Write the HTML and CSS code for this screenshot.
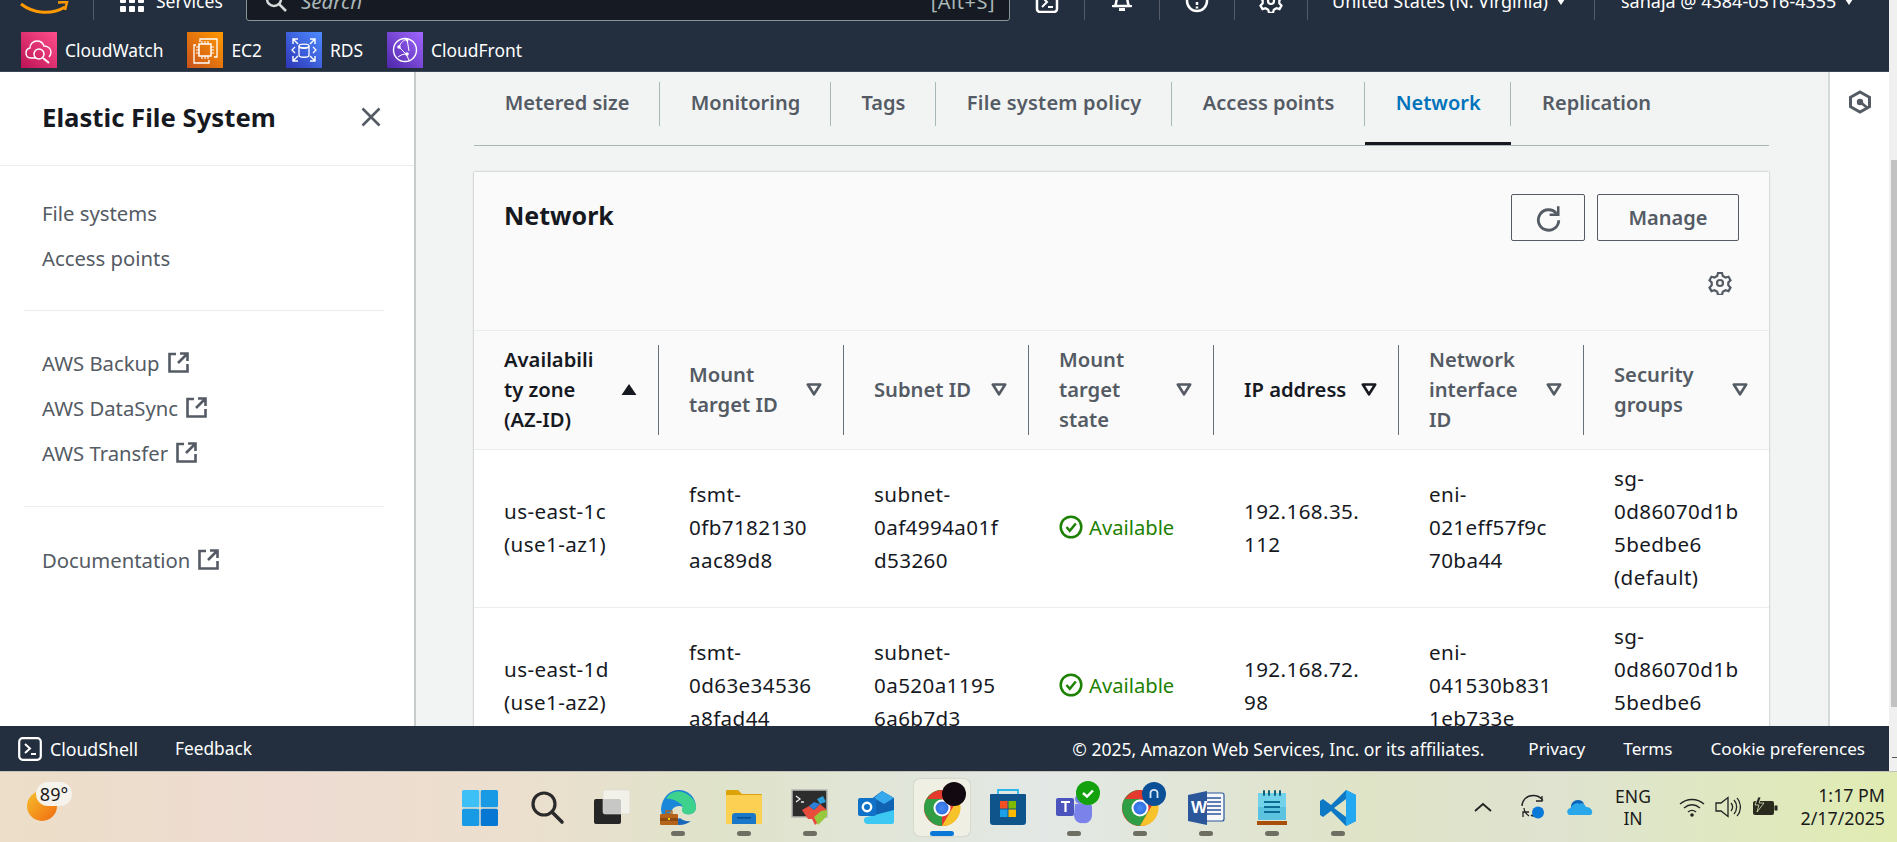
FILE: index.html
```html
<!DOCTYPE html>
<html lang="en">
<head>
<meta charset="utf-8">
<title>Elastic File System - Network</title>
<link rel="stylesheet" href="styles.css">
</head>
<body>
<svg class="defs" width="0" height="0" aria-hidden="true">
  <defs>
    <symbol id="ext" viewBox="0 0 21 21"><path d="M8 2H1.500v17.500h18V12" fill="none" stroke="currentColor" stroke-width="2.600"/><path d="M12 1.500h7.500V9M19 2l-9 9" fill="none" stroke="currentColor" stroke-width="2.600"/></symbol>
    <symbol id="sort" viewBox="0 0 16 13"><path d="M1.800 1.500h12.400L8 11.300z" fill="none" stroke="currentColor" stroke-width="2.600" stroke-linejoin="round"/></symbol>
    <symbol id="ok" viewBox="0 0 24 24"><circle cx="12" cy="12" r="10.300" fill="none" stroke="#1d8102" stroke-width="2.500"/><path d="M7.500 12l3.300 3.800 6-7.300" fill="none" stroke="#1d8102" stroke-width="2.500"/></symbol>
    <radialGradient id="gChrome" cx=".5" cy=".5" r=".5"><stop offset="0" stop-color="#4a8af4"/><stop offset="1" stop-color="#2f6fe0"/></radialGradient>
    <linearGradient id="gSun" x1="0" y1="0" x2="1" y2="1"><stop offset="0" stop-color="#f5c02c"/><stop offset="1" stop-color="#f26a10"/></linearGradient>
    <linearGradient id="gPink" x1="1" y1="0" x2="0" y2="1"><stop offset="0" stop-color="#ff4f8b"/><stop offset="1" stop-color="#bc1356"/></linearGradient>
    <linearGradient id="gOrange" x1="1" y1="0" x2="0" y2="1"><stop offset="0" stop-color="#f90"/><stop offset="1" stop-color="#c8511b"/></linearGradient>
    <linearGradient id="gBlue" x1="1" y1="0" x2="0" y2="1"><stop offset="0" stop-color="#4d8bff"/><stop offset="1" stop-color="#2e36b8"/></linearGradient>
    <linearGradient id="gPurple" x1="1" y1="0" x2="0" y2="1"><stop offset="0" stop-color="#a166ff"/><stop offset="1" stop-color="#4d27a8"/></linearGradient>
  </defs>
</svg>

<div class="page">
  <div class="app">
    <header class="console">
      <div class="top-row">
        <svg class="smile" width="50" height="16" viewBox="0 0 50 16"><path d="M1 3c13 10 31 11 44 3" fill="none" stroke="#f90" stroke-width="3"/><path d="M38 1.500l9-.5-2 8" fill="none" stroke="#f90" stroke-width="2.500"/></svg>
        <span class="top-sep sep-logo"></span>
        <svg class="grid-ico" width="24" height="24" viewBox="0 0 24 24" fill="#fff"><rect x="0" y="0" width="6" height="6" rx="1"/><rect x="9" y="0" width="6" height="6" rx="1"/><rect x="18" y="0" width="6" height="6" rx="1"/><rect x="0" y="9" width="6" height="6" rx="1"/><rect x="9" y="9" width="6" height="6" rx="1"/><rect x="18" y="9" width="6" height="6" rx="1"/><rect x="0" y="18" width="6" height="6" rx="1"/><rect x="9" y="18" width="6" height="6" rx="1"/><rect x="18" y="18" width="6" height="6" rx="1"/></svg>
        <span class="top-text services">Services</span>
        <div class="search">
          <svg width="22" height="22" viewBox="0 0 22 22"><circle cx="9" cy="9" r="7" fill="none" stroke="#d5dbdb" stroke-width="2.500"/><path d="M14 14l7 7" stroke="#d5dbdb" stroke-width="2.500"/></svg>
          <span class="search-ph">Search</span>
          <span class="search-key">[Alt+S]</span>
        </div>
        <span class="top-ico"><svg width="24" height="24" viewBox="0 0 24 24"><rect x="2" y="1" width="20" height="22" rx="3" fill="none" stroke="#fff" stroke-width="2.500"/><path d="M7 8l5 5-5 5M13 18h5" fill="none" stroke="#fff" stroke-width="2"/></svg></span>
        <span class="top-sep"></span>
        <span class="top-ico"><svg width="24" height="24" viewBox="0 0 24 24"><path d="M5 17c2-3 1-8 3-11 2-3 6-3 8 0 2 3 1 8 3 11z" fill="none" stroke="#fff" stroke-width="2.500"/><path d="M2 18h20v-2H2zM9 19h6v3H9z" fill="#fff"/></svg></span>
        <span class="top-sep"></span>
        <span class="top-ico"><svg width="24" height="24" viewBox="0 0 24 24"><circle cx="12" cy="12" r="10" fill="none" stroke="#fff" stroke-width="2.500"/><path d="M12 13v3M12 17.500v2" stroke="#fff" stroke-width="2.500"/></svg></span>
        <span class="top-sep"></span>
        <span class="top-ico ico-last"><svg width="24" height="24" viewBox="0 0 24 24"><path d="M10 2h4l.8 3 2.700 1.500 3-.8 2 3.500-2.200 2.200v3l2.200 2.200-2 3.500-3-.8-2.700 1.500-.8 3h-4l-.8-3-2.700-1.500-3 .8-2-3.500 2.200-2.200v-3L1.500 9.200l2-3.500 3 .8L9.200 5z" fill="none" stroke="#fff" stroke-width="2.200"/><circle cx="12" cy="12" r="3" fill="none" stroke="#fff" stroke-width="2.200"/></svg></span>
        <span class="top-sep"></span>
        <span class="top-text region">United States (N. Virginia) <i class="caret"></i></span>
        <span class="top-sep"></span>
        <span class="top-text account">sahaja @ 4384-0516-4355 <i class="caret"></i></span>
      </div>
      <nav class="fav-row">
        <a class="fav">
          <svg class="tile" viewBox="0 0 36 36"><rect width="36" height="36" fill="url(#gPink)"/><path d="M15 26H10c-3 0-5-2-5-5s2-4.500 4-5c0-4 3-7 7-7 3 0 6 2 7 5 3 0 7 2 7 6 0 2-1 4-2 5" fill="none" stroke="#fff" stroke-width="1.400"/><circle cx="18" cy="22" r="5" fill="none" stroke="#fff" stroke-width="1.500"/><path d="M22 26l6 5" stroke="#fff" stroke-width="2"/></svg>
          <span>CloudWatch</span>
        </a>
        <a class="fav">
          <svg class="tile" viewBox="0 0 36 36"><rect width="36" height="36" fill="url(#gOrange)"/><path d="M9 13H7v18h15v-3" fill="none" stroke="#fff" stroke-width="1.300"/><path d="M13 10V7h17v18h-3" fill="none" stroke="#fff" stroke-width="1.300"/><rect x="12" y="12" width="12" height="12" fill="none" stroke="#fff" stroke-width="1.500"/><path d="M15 12V9M18 12V9M21 12V9M15 27v-3M18 27v-3M21 27v-3M12 15H9M12 18H9M12 21H9M27 15h-3M27 18h-3M27 21h-3" stroke="#fff" stroke-width="1.100"/></svg>
          <span>EC2</span>
        </a>
        <a class="fav">
          <svg class="tile" viewBox="0 0 36 36"><rect width="36" height="36" fill="url(#gBlue)"/><path d="M7 12V7h5M7 7l5 5M29 12V7h-5M29 7l-5 5M7 24v5h5M7 29l5-5M29 24v5h-5M29 29l-5-5" fill="none" stroke="#fff" stroke-width="1.400"/><path d="M13 14c0 3 10 3 10 0v9c0 3-10 3-10 0z" fill="none" stroke="#fff" stroke-width="1.300"/><ellipse cx="18" cy="14" rx="5" ry="1.800" fill="none" stroke="#fff" stroke-width="1.300"/><path d="M9 15l-3 3 3 3M27 15l3 3-3 3" fill="none" stroke="#fff" stroke-width="1.300"/></svg>
          <span>RDS</span>
        </a>
        <a class="fav">
          <svg class="tile" viewBox="0 0 36 36"><rect width="36" height="36" fill="url(#gPurple)"/><circle cx="18" cy="18" r="11.500" fill="none" stroke="#fff" stroke-width="1.400"/><path d="M12 15l7 7 3 6M12 15c2-5 5-7 8-8M20 7l2 12M11 25c3-2 5-3 8-3" fill="none" stroke="#fff" stroke-width="1"/><circle cx="12" cy="15" r="1.800" fill="#fff"/><circle cx="20" cy="8" r="1.500" fill="#fff"/><circle cx="20" cy="22" r="1.800" fill="#fff"/></svg>
          <span>CloudFront</span>
        </a>
      </nav>
    </header>

    <div class="workspace">
      <aside class="sidebar">
        <div class="side-head">
          <h2>Elastic File System</h2>
          <svg width="20" height="20" viewBox="0 0 20 20"><path d="M1.500 1.500l17 17M18.500 1.500l-17 17" stroke="#545b64" stroke-width="2.600"/></svg>
        </div>
        <ul class="side-list side-first">
          <li>File systems</li>
          <li>Access points</li>
        </ul>
        <hr class="side-rule">
        <ul class="side-list">
          <li>AWS Backup <svg class="ext"><use href="#ext"/></svg></li>
          <li>AWS DataSync <svg class="ext"><use href="#ext"/></svg></li>
          <li>AWS Transfer <svg class="ext"><use href="#ext"/></svg></li>
        </ul>
        <hr class="side-rule">
        <ul class="side-list side-last">
          <li>Documentation <svg class="ext"><use href="#ext"/></svg></li>
        </ul>
      </aside>

      <main class="content">
        <div class="tabs">
          <a class="tab">Metered size</a>
          <a class="tab">Monitoring</a>
          <a class="tab">Tags</a>
          <a class="tab tab-wide">File system policy</a>
          <a class="tab">Access points</a>
          <a class="tab tab-on">Network</a>
          <a class="tab tab-last">Replication</a>
        </div>
        <section class="card">
          <div class="card-head">
            <h3>Network</h3>
            <div class="card-actions">
              <div class="btns">
                <button class="btn btn-icon"><svg width="26" height="28" viewBox="0 0 24 26"><path d="M20 9a9.500 9.500 0 1 0 2 6" fill="none" stroke="#545b64" stroke-width="2.600"/><path d="M21.500 2v8h-8" fill="none" stroke="#545b64" stroke-width="2.400"/></svg></button>
                <button class="btn">Manage</button>
              </div>
              <svg class="gear" width="24" height="24" viewBox="0 0 24 24"><path d="M10 2h4l.8 3 2.700 1.500 3-.8 2 3.500-2.200 2.200v3l2.200 2.200-2 3.500-3-.8-2.700 1.500-.8 3h-4l-.8-3-2.700-1.500-3 .8-2-3.500 2.200-2.200v-3L1.500 9.200l2-3.500 3 .8L9.200 5z" fill="none" stroke="#545b64" stroke-width="2.200"/><circle cx="12" cy="12" r="3" fill="none" stroke="#545b64" stroke-width="2.200"/></svg>
            </div>
          </div>
          <table class="grid">
            <thead>
              <tr>
                <th class="sorted"><div class="th"><span>Availabili<br>ty zone<br>(AZ-ID)</span><svg class="sort-up" width="16" height="13" viewBox="0 0 16 13"><path d="M8 1l7.500 11H.5z" fill="#16191f"/></svg></div></th>
                <th><div class="th"><span>Mount<br>target ID</span><svg class="sort"><use href="#sort"/></svg></div></th>
                <th><div class="th"><span>Subnet ID</span><svg class="sort"><use href="#sort"/></svg></div></th>
                <th><div class="th"><span>Mount<br>target<br>state</span><svg class="sort"><use href="#sort"/></svg></div></th>
                <th class="sorted"><div class="th"><span>IP address</span><svg class="sort"><use href="#sort"/></svg></div></th>
                <th><div class="th"><span>Network<br>interface<br>ID</span><svg class="sort"><use href="#sort"/></svg></div></th>
                <th class="end"><div class="th"><span>Security<br>groups</span><svg class="sort"><use href="#sort"/></svg></div></th>
              </tr>
            </thead>
            <tbody>
              <tr>
                <td>us-east-1c<br>(use1-az1)</td>
                <td>fsmt-<br>0fb7182130<br>aac89d8</td>
                <td>subnet-<br>0af4994a01f<br>d53260</td>
                <td><span class="status"><svg class="ok"><use href="#ok"/></svg>Available</span></td>
                <td>192.168.35.<br>112</td>
                <td>eni-<br>021eff57f9c<br>70ba44</td>
                <td>sg-<br>0d86070d1b<br>5bedbe6<br>(default)</td>
              </tr>
              <tr>
                <td>us-east-1d<br>(use1-az2)</td>
                <td>fsmt-<br>0d63e34536<br>a8fad44</td>
                <td>subnet-<br>0a520a1195<br>6a6b7d3</td>
                <td><span class="status"><svg class="ok"><use href="#ok"/></svg>Available</span></td>
                <td>192.168.72.<br>98</td>
                <td>eni-<br>041530b831<br>1eb733e</td>
                <td>sg-<br>0d86070d1b<br>5bedbe6<br>(default)</td>
              </tr>
            </tbody>
          </table>
        </section>
      </main>

      <aside class="tools">
        <svg width="24" height="24" viewBox="0 0 24 24"><path d="M12 2l9.500 5.300v9.400L12 22l-9.500-5.300V7.300z" fill="none" stroke="#545b64" stroke-width="3"/><circle cx="12" cy="12" r="3.200" fill="#545b64"/><path d="M12 12l7 5.500" stroke="#545b64" stroke-width="2.800"/></svg>
      </aside>
    </div>

    <footer class="foot">
      <svg width="24" height="24" viewBox="0 0 24 24"><rect x="1.200" y="1.200" width="21.600" height="21.600" rx="3.500" fill="none" stroke="#fff" stroke-width="2.200"/><path d="M7 7l5 4.500L7 16M13 17h5" fill="none" stroke="#fff" stroke-width="2"/></svg>
      <span class="foot-shell">CloudShell</span>
      <span class="foot-feedback">Feedback</span>
      <span class="foot-copy">© 2025, Amazon Web Services, Inc. or its affiliates.</span>
      <span class="foot-link">Privacy</span>
      <span class="foot-link">Terms</span>
      <span class="foot-link">Cookie preferences</span>
    </footer>
  </div>
  <div class="scrollbar"><div class="thumb"></div><div class="arrow"></div></div>
</div>

<div class="taskbar">
  <div class="weather">
    <svg width="36" height="36" viewBox="0 0 36 36"><circle cx="15" cy="18" r="15" fill="url(#gSun)"/></svg>
    <span class="temp">89°</span>
  </div>
  <div class="apps">
    <div class="slot"><svg viewBox="0 0 36 36"><rect width="17.300" height="17.300" rx="1.500" fill="#3cc0f5"/><rect x="18.700" width="17.300" height="17.300" rx="1.500" fill="#189be4"/><rect y="18.700" width="17.300" height="17.300" rx="1.500" fill="#189be4"/><rect x="18.700" y="18.700" width="17.300" height="17.300" rx="1.500" fill="#0678d4"/></svg></div>
    <div class="slot"><svg viewBox="0 0 36 36"><circle cx="16" cy="14" r="11" fill="none" stroke="#2a2a2a" stroke-width="3.200"/><path d="M24 22l10 10" stroke="#2a2a2a" stroke-width="3.600" stroke-linecap="round"/></svg></div>
    <div class="slot"><svg viewBox="0 0 36 36"><rect y="9" width="27" height="25" rx="2" fill="#262626"/><rect x="9" y="0" width="27" height="24" rx="2" fill="#f5f5f2" fill-opacity=".78" stroke="#d8d8d2" stroke-width=".6"/></svg></div>
    <div class="slot dotted"><svg viewBox="0 0 36 36"><path d="M1 19C2 7 10 0 19 0c9 0 17 7 17 17 0 6-5 8-10 7-4-1-4-5-3-7-3-2-9-1-11 3-2 3-3 8 0 13C6 32 1 26 1 19z" fill="#1b87d8"/><path d="M6 9c4-8 13-9 19-6 6 3 11 8 11 14 0 6-5 8-10 7-4-1-5-4-3-7-2-4-10-9-17-8z" fill="#3fd28c"/><path d="M14 34c5 2 12 1 17-3-4 1-9-1-11-3-3 1-6 3-6 6z" fill="#1768b8"/><rect x="0" y="24" width="18" height="11" rx="1" fill="#b5631a"/><rect x="0" y="28" width="18" height="3" fill="#8d4a10"/><rect x="6" y="21" width="6" height="3" fill="none" stroke="#b5631a" stroke-width="1.300"/><rect x="8" y="28" width="2" height="2" fill="#f5d000"/></svg></div>
    <div class="slot dotted"><svg viewBox="0 0 36 36"><path d="M0 1a1 1 0 0 1 1-1h11l4 4h19a1 1 0 0 1 1 1v28H0z" fill="#dca30b"/><path d="M0 5h36v28a1 1 0 0 1-1 1H1a1 1 0 0 1-1-1z" fill="#fcd052"/><path d="M6 34V26a3 3 0 0 1 3-3h18a3 3 0 0 1 3 3v8z" fill="#1b78c8"/><rect x="11" y="27" width="14" height="1.600" fill="#0b4f90"/></svg></div>
    <div class="slot dotted"><svg viewBox="0 0 36 36"><rect x="0" y="0" width="35" height="27" fill="#2d2d2d" stroke="#b8b8b4" stroke-width="1.500"/><path d="M4 6l4 3-4 3M9 12h3" fill="none" stroke="#eee" stroke-width="1.300"/><path d="M10 20l7-4 5 4 6-6 7 6-5 5 2 2-9 8-3-6-4 0z" fill="#e84c3d"/><path d="M17 16l5-4 6 2-6 6z" fill="#2d7fd8"/><path d="M25 9l6-3 3 6-6 2z" fill="#2d9fd8"/><path d="M22 27l7-6 6-1v6l-9 9z" fill="#97c93c"/></svg></div>
    <div class="slot"><svg viewBox="0 0 36 36"><path d="M12 10l12-9 12 7v17H12z" fill="#0f63b2"/><path d="M24 1l12 7-10 6-10-6z" fill="#36a8ec"/><path d="M6 30c0-2 1-3 3-3l27-7v12a2 2 0 0 1-2 2H10a4 4 0 0 1-4-4z" fill="#3cc8f2"/><rect y="8" width="18" height="18" rx="2" fill="#0f72c8"/><circle cx="9" cy="17" r="4.200" fill="none" stroke="#fff" stroke-width="2.400"/></svg></div>
    <div class="slot current"><svg viewBox="0 0 36 36"><circle cx="18" cy="18" r="18" fill="#e53b2e"/><path d="M18 18L3 27a18 18 0 0 0 15 9z" fill="#2f9e44"/><path d="M0 18a18 18 0 0 0 3 9l15-9V0A18 18 0 0 0 0 18z" fill="#2f9e44"/><path d="M3 9A18 18 0 0 1 18 0a18 18 0 0 1 16 9H18z" fill="#e53b2e"/><path d="M34 9a18 18 0 0 1-16 27l8-14z" fill="#f7c32b"/><circle cx="18" cy="18" r="8.500" fill="#fff"/><circle cx="18" cy="18" r="6.500" fill="url(#gChrome)"/><ellipse cx="30" cy="4" rx="12" ry="12" fill="#120a10"/></svg><i class="run"></i></div>
    <div class="slot"><svg viewBox="0 0 36 36"><path d="M8 4V0h20v4" fill="none" stroke="#2bb6e8" stroke-width="1.800"/><path d="M1 4h34a1 1 0 0 1 1 1v27a3 3 0 0 1-3 3H3a3 3 0 0 1-3-3V5a1 1 0 0 1 1-1z" fill="#10548c"/><rect x="10" y="11" width="7.500" height="7.500" fill="#f25022"/><rect x="18.500" y="11" width="7.500" height="7.500" fill="#7fba00"/><rect x="10" y="19.500" width="7.500" height="7.500" fill="#1aa0e8"/><rect x="18.500" y="19.500" width="7.500" height="7.500" fill="#ffb900"/></svg></div>
    <div class="slot dotted"><svg viewBox="0 0 36 36"><circle cx="24" cy="9" r="5" fill="#7b83eb"/><path d="M19 14h14a3 3 0 0 1 3 3v8c0 6-5 9-9 8-5 1-9-3-9-8z" fill="#7b83eb"/><rect x="0" y="8" width="18" height="18" rx="2" fill="#4b53bc"/><path d="M5 12h9M9.500 12v10" stroke="#fff" stroke-width="2.200"/><circle cx="32" cy="3" r="12" fill="#13a10e"/><path d="M27 3l4 3.500 6-6" fill="none" stroke="#fff" stroke-width="2.400"/></svg></div>
    <div class="slot dotted"><svg viewBox="0 0 36 36"><circle cx="18" cy="18" r="18" fill="#e53b2e"/><path d="M0 18a18 18 0 0 0 3 9 18 18 0 0 0 15 9l8-14-8-4V0A18 18 0 0 0 0 18z" fill="#2f9e44"/><path d="M3 9A18 18 0 0 1 18 0a18 18 0 0 1 16 9H18z" fill="#e53b2e"/><path d="M34 9a18 18 0 0 1-16 27l8-14z" fill="#f7c32b"/><circle cx="18" cy="18" r="8.500" fill="#fff"/><circle cx="18" cy="18" r="6.500" fill="url(#gChrome)"/><circle cx="32" cy="4" r="12" fill="#0b4f96"/><path d="M28.500 8V2.800a3.500 3 0 0 1 7 0V8" fill="none" stroke="#d8e6f5" stroke-width="1.800"/></svg></div>
    <div class="slot dotted"><svg viewBox="0 0 36 36"><path d="M15 3h19a2 2 0 0 1 2 2v24a2 2 0 0 1-2 2H15z" fill="#f5f7fa" stroke="#2b579a" stroke-width="1.200"/><path d="M19 8h14M19 12h14M19 16h14M19 20h14M19 24h14" stroke="#2b579a" stroke-width="1.600"/><path d="M0 5l19-4v34L0 31z" fill="#2b579a"/><text x="3" y="23" class="word-w">W</text></svg></div>
    <div class="slot dotted"><svg viewBox="0 0 36 36"><path d="M4 3h28v27H4z" fill="#5bc2e0"/><path d="M4 3h28v14H4z" fill="#72d2ea"/><rect x="3" y="31" width="30" height="4" fill="#a94f0c"/><path d="M10 12h16M10 17h16M10 22h16" stroke="#0d6c93" stroke-width="1.800"/><path d="M10 1v4M15 1v4M21 1v4M26 1v4" stroke="#0d5f80" stroke-width="2" stroke-linecap="round"/></svg></div>
    <div class="slot dotted"><svg viewBox="0 0 36 36"><path d="M26 0l10 5v26l-10 5-15-15-8 6-3-2v-14l3-2 8 6z" fill="#0e78c4"/><path d="M26 0l10 5v26l-10 5z" fill="#23a8f2"/><path d="M26 9L14 18l12 9z" fill="#dfe4c4"/></svg></div>
  </div>
  <div class="tray">
    <svg class="tray-chev" width="18" height="10" viewBox="0 0 18 10"><path d="M1 9l8-7 8 7" fill="none" stroke="#222" stroke-width="1.800"/></svg>
    <svg class="tray-sync" width="26" height="26" viewBox="0 0 26 26"><path d="M2 12C2 6 7 1.500 13 1.500c5 0 8 2 10 5M22 2v5h-6M4 14c0 3 2 6 5 8M3 23v-5h6" fill="none" stroke="#222" stroke-width="1.300"/><path d="M11 21c1 1 2 1 3 1" stroke="#222" stroke-width="1.300"/><circle cx="18" cy="18.500" r="6" fill="#0a78d7"/></svg>
    <svg class="tray-cloud" width="26" height="18" viewBox="0 0 26 18"><path d="M4 9c0-4 3-7 7-7 3 0 5 1 6 4-5-1-8 1-9 4-3 0-5 1-4-1z" fill="#0a64b8"/><path d="M2 17c-3-2-2-7 2-7 1-3 5-6 9-4 3-1 5 0 6 3 4 0 7 3 6 6 0 1-1 2-2 2z" fill="#28a8ea"/></svg>
    <span class="lang">ENG<br>IN</span>
    <svg class="tray-wifi" width="26" height="20" viewBox="0 0 26 20"><path d="M1 7c7-6 17-6 24 0M5 11c5-4 11-4 16 0M9 15c2.500-2 5.500-2 8 0" fill="none" stroke="#222" stroke-width="1.400"/><circle cx="13" cy="18" r="1.800" fill="#222"/></svg>
    <svg class="tray-vol" width="26" height="22" viewBox="0 0 26 22"><path d="M1 7h5l7-5.500v19L6 15H1z" fill="none" stroke="#222" stroke-width="1.300"/><path d="M16 7c2 2.500 2 5.500 0 8M19 4c3.500 4 3.500 10 0 14M22 2c4.500 5 4.500 13 0 18" fill="none" stroke="#222" stroke-width="1.300"/></svg>
    <svg class="tray-batt" width="26" height="22" viewBox="0 0 26 22"><rect x="1" y="5" width="21" height="14" rx="2" fill="#2a2a1e"/><rect x="22.500" y="9.500" width="3" height="5" fill="#222"/><path d="M6 1L3 9h4l-2 7 7-9H7l2-6z" fill="#222" stroke="#e0eab4" stroke-width=".8"/></svg>
    <span class="clock">1:17 PM<br>2/17/2025</span>
  </div>
</div>
</body>
</html>
```
FILE: styles.css
```css
* { box-sizing: border-box; }
html, body { margin: 0; height: 100%; }
body {
  width: 1897px; height: 842px; overflow: hidden;
  font-family: "Noto Sans", "Liberation Sans", sans-serif;
  font-size: 20px; color: #16191f; background: #fff;
  display: flex; flex-direction: column;
}
.defs { position: absolute; }
ul { list-style: none; margin: 0; padding: 0; }

.page { display: flex; height: 771px; flex: none; }
.app { width: 1889px; display: flex; flex-direction: column; }
.scrollbar { width: 8px; background: #f0f0f0; padding-top: 160px; display: flex; flex-direction: column; align-items: flex-end; }
.thumb { width: 6px; height: 547px; background: #c2c2c2; }
.arrow { width: 5px; height: 1px; margin-top: 50px; background: #555; }

/* console header */
.console { height: 72px; flex: none; background: #232f3e; border-bottom: 1px solid #3b4654; }
.top-row { height: 26px; padding-bottom: 5px; display: flex; align-items: flex-end; color: #fff; }
.top-row > * { flex: none; }
.smile { margin: 0 0 4px 20px; }
.top-sep { width: 1px; height: 36px; background: #545b64; margin-bottom: 1px; }
.sep-logo { margin-left: 23px; }
.grid-ico { margin: 0 0 9px 26px; }
.top-text { font-size: 18px; height: 30px; line-height: 20px; }
.services { margin-left: 12px; width: 90px; font-size: 17.500px; }
.search {
  width: 764px; height: 40px; background: #161a22;
  border: 1px solid #879596; border-radius: 0 0 3px 3px;
  display: flex; align-items: center; gap: 14px; padding: 0 14px 0 18px;
}
.search-ph { color: #aab7b8; font-style: italic; font-size: 20.500px; }
.search-key { margin-left: auto; color: #aab7b8; font-size: 20px; letter-spacing: .5px; }
.top-ico { width: 74px; height: 40px; display: flex; align-items: center; justify-content: center; }
.ico-last { width: 72px; }
.region { padding: 0 26px 0 24px; width: 286px; white-space: nowrap; }
.account { padding-left: 26px; white-space: nowrap; }
.caret { display: inline-block; border: 4px solid transparent; border-top: 6px solid #fff; border-bottom: 0; margin: 0 0 3px 4px; }

.fav-row { height: 45px; display: flex; align-items: flex-start; padding: 6px 0 0 21px; color: #fff; font-size: 17.400px; }
.fav { display: flex; align-items: center; gap: 8px; height: 36px; margin-right: 24px; }
.tile { width: 36px; height: 36px; flex: none; }

/* workspace */
.workspace { flex: 1; min-height: 0; display: flex; overflow: hidden; }
.sidebar { width: 416px; flex: none; background: #fff; border-right: 2px solid #c8cccc; color: #545b64; font-size: 20.300px; }
.side-head { height: 94px; display: flex; align-items: center; justify-content: space-between; padding: 0 33px 3px 42px; border-bottom: 1px solid #eaeded; }
.side-head h2 { margin: 0; font-size: 25.700px; font-weight: 700; color: #16191f; }
.side-list { padding: 29px 0 31px 42px; }
.side-first { padding: 24px 0 30px 42px; }
.side-last { padding-top: 30px; }
.side-list li { height: 45px; display: flex; align-items: center; gap: 8px; }
.side-rule { margin: 0 30px 0 24px; border: 0; border-top: 1px solid #eaeded; }
.ext { width: 21px; height: 21px; color: #545b64; }

.content { flex: 1; min-width: 0; background: #f2f3f3; padding: 0 59px 0 58px; overflow: hidden; }
.tabs { display: flex; margin-top: 10px; border-bottom: 1px solid #aab7b8; color: #545b64; font-weight: 600; }
.tab { position: relative; height: 63px; padding: 7px 30.700px 0; white-space: nowrap; font-size: 20px; line-height: 28px; }
.tab::after { content: ""; position: absolute; right: 0; top: 0; height: 44px; width: 1px; background: #aab7b8; }
.tab-wide { letter-spacing: .2px; }
.tab-last::after { display: none; }
.tab-on { color: #0073bb; border-bottom: 3px solid #16191f; }

.card { margin-top: 26px; background: #fafafa; box-shadow: 0 0 2px rgba(0, 28, 36, .35); }
.card-head { height: 159px; display: flex; justify-content: space-between; padding: 22px 30px 0 30px; border-bottom: 1px solid #eaeded; }
.card-head h3 { margin: 6px 0 0; font-size: 25px; font-weight: 700; line-height: 30px; }
.card-actions { display: flex; flex-direction: column; align-items: flex-end; gap: 30px; }
.btns { display: flex; gap: 12px; }
.btn { height: 47px; width: 142px; background: #fff0; border: 1px solid #545b64; border-radius: 2px; color: #545b64; font: 600 20px "Noto Sans", sans-serif; padding: 0; display: flex; align-items: center; justify-content: center; }
.btn-icon { width: 74px; }
.gear { margin-right: 7px; }

.grid { width: 1295px; table-layout: fixed; border-collapse: collapse; }
.grid th { padding: 14px 0; background: #fafafa; border-bottom: 1px solid #eaeded; font-weight: 600; color: #545b64; text-align: left; line-height: 30px; font-size: 20.200px; }
.grid th.sorted { color: #16191f; }
.th { height: 90px; display: flex; align-items: center; justify-content: space-between; padding: 0 21px 2px 30px; border-right: 1px solid #687078; }
.end .th { border-right: 0; }
.sort { width: 16px; height: 13px; flex: none; }
.sort-up { flex: none; }
.grid td { height: 158px; padding: 0 0 2px 30px; background: #fff; border-bottom: 1px solid #eaeded; line-height: 33px; font-size: 20.600px; letter-spacing: .4px; color: #16191f; white-space: nowrap; vertical-align: middle; }
.status { color: #1d8102; display: inline-flex; align-items: center; gap: 6px; padding-top: 4px; font-size: 20.200px; letter-spacing: 0; }
.ok { width: 24px; height: 24px; flex: none; }

.tools { width: 61px; flex: none; background: #fff; border-left: 2px solid #d5dbdb; display: flex; justify-content: center; align-items: flex-start; padding-top: 18px; }

/* footer */
.foot { height: 45px; flex: none; background: #232f3e; color: #fff; display: flex; align-items: center; padding: 0 24px 0 18px; font-size: 17.100px; white-space: nowrap; }
.foot-shell { margin-left: 8px; font-size: 17.700px; }
.foot-feedback { margin-left: 37px; font-size: 17.300px; }
.foot-copy { margin-left: auto; font-size: 17.500px; }
.foot-link { margin-left: 38px; }
.foot-copy + .foot-link { margin-left: 44px; }

/* taskbar */
.taskbar { height: 71px; flex: none; display: flex; border-top: 1px solid #c4c2ba; background: linear-gradient(90deg, #ecdec8 0%, #eedcd2 15%, #ecdfce 27%, #dfe3ca 38%, #e3e8e6 55%, #dfe3c6 72%, #dfe3d0 82%, #e0ecb2 100%); color: #1a1a1a; }
.weather { width: 447px; flex: none; position: relative; padding: 16px 0 0 27px; }
.temp { position: absolute; left: 36px; top: 10px; width: 36px; height: 24px; border-radius: 12px; background: #f6f3ec; font: 18px/24px "Noto Sans", sans-serif; text-align: center; }
.apps { display: flex; flex: none; }
.slot { position: relative; width: 66px; height: 70px; padding-top: 18px; display: flex; justify-content: center; }
.slot svg { width: 36px; height: 36px; overflow: visible; }
.dotted::after { content: ""; position: absolute; left: 26px; bottom: 6px; width: 14px; height: 5px; border-radius: 3px; background: #6e6e62; }
.current::before { content: ""; position: absolute; inset: 7px 5px 6px; border-radius: 6px; background: #efefe4; box-shadow: 0 0 2px rgba(0, 0, 0, .2); }
.current svg { position: relative; }
.run { position: absolute; left: 21px; bottom: 6px; width: 24px; height: 5px; border-radius: 3px; background: #0a78d7; }
.word-w { font: 700 17px "Liberation Sans", sans-serif; fill: #fff; }
.tray { flex: 1; min-width: 0; display: flex; align-items: center; padding-right: 12px; font-size: 17.800px; }
.tray-chev { margin-left: 103px; }
.tray-sync { margin-left: 28px; }
.tray-cloud { margin-left: 21px; }
.lang { margin-left: 15px; width: 50px; text-align: center; line-height: 22px; font-size: 17.500px; }
.tray-wifi { margin-left: 21px; }
.tray-vol { margin-left: 10px; }
.tray-batt { margin-left: 11px; }
.clock { margin-left: auto; text-align: right; line-height: 23px; white-space: nowrap; }
```
